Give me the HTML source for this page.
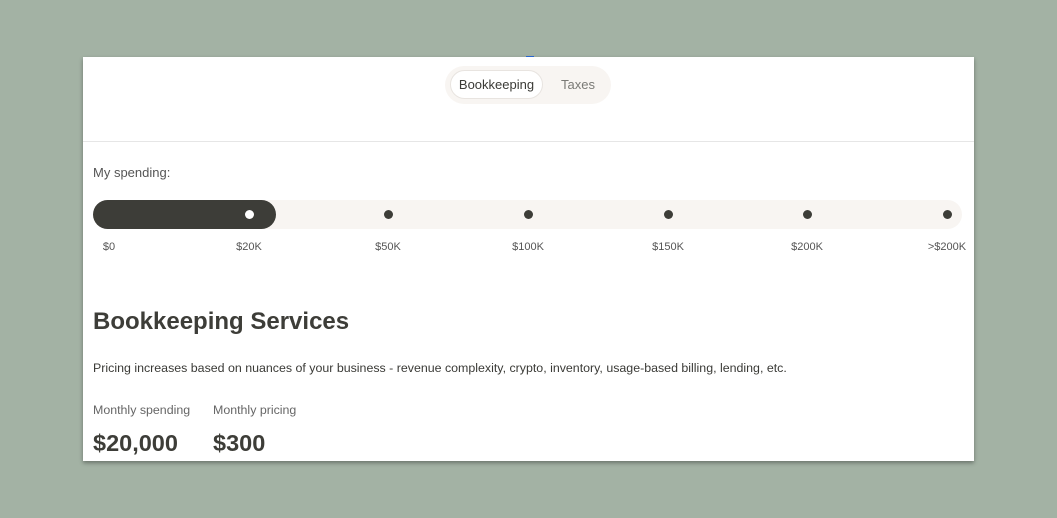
<!DOCTYPE html>
<html><head><style>
body{margin:0;width:1057px;height:518px;background:#a3b2a4;font-family:"Liberation Sans",sans-serif;position:relative;overflow:hidden}
.card{position:absolute;left:83px;top:57px;width:891px;height:404px;background:#fff;box-shadow:0 2px 4px rgba(0,0,0,.35)}
.a{position:absolute}
.tabs{left:362px;top:9px;width:166px;height:38px;border-radius:19px;background:#f8f5f2}
.act{left:5px;top:4px;width:93px;height:29px;border-radius:15px;background:#fff;border:1px solid #e8e4e0;box-sizing:border-box;font-size:13px;color:#3a3a36;text-align:center;line-height:27px}
.tx{left:116px;top:4px;font-size:13px;color:#7a7a76;line-height:29px}
.track{left:10px;top:143px;width:869px;height:29px;border-radius:15px;background:#f8f5f2}
.fill{left:10px;top:143px;width:183px;height:29px;border-radius:15px;background:#3d3d38}
.dot{width:9px;height:9px;border-radius:50%;background:#3d3d38;top:153px}
.lb{top:184px;font-size:11px;color:#555;transform:translateX(-50%)}
</style></head><body>
<div class="a" style="left:526px;top:56px;width:8px;height:4px;background:#2a6bd8"></div>
<div class="card">
<div class="a tabs"><div class="a act">Bookkeeping</div><div class="a tx">Taxes</div></div>
<div class="a" style="left:0;top:84px;width:891px;height:1px;background:#e6e6e6"></div>
<div class="a" style="left:10px;top:108px;font-size:13px;color:#555">My spending:</div>
<div class="a track"></div><div class="a fill"></div>
<div class="a dot" style="left:162px;background:#fff"></div>
<div class="a dot" style="left:301px"></div>
<div class="a dot" style="left:441px"></div>
<div class="a dot" style="left:581px"></div>
<div class="a dot" style="left:720px"></div>
<div class="a dot" style="left:860px"></div>
<div class="a lb" style="left:26px">$0</div>
<div class="a lb" style="left:166px">$20K</div>
<div class="a lb" style="left:305px">$50K</div>
<div class="a lb" style="left:445px">$100K</div>
<div class="a lb" style="left:585px">$150K</div>
<div class="a lb" style="left:724px">$200K</div>
<div class="a lb" style="left:864px">&gt;$200K</div>
<div class="a" style="left:10px;top:251px;font-size:24px;font-weight:bold;color:#3d3d38">Bookkeeping Services</div>
<div class="a" style="left:10px;top:304px;font-size:12.4px;color:#3a3a36">Pricing increases based on nuances of your business - revenue complexity, crypto, inventory, usage-based billing, lending, etc.</div>
<div class="a" style="left:10px;top:346px;font-size:12.4px;color:#666">Monthly spending</div>
<div class="a" style="left:130px;top:346px;font-size:12.4px;color:#666">Monthly pricing</div>
<div class="a" style="left:10px;top:373px;font-size:23.5px;font-weight:bold;color:#3d3d38">$20,000</div>
<div class="a" style="left:130px;top:373px;font-size:23.5px;font-weight:bold;color:#3d3d38">$300</div>
</div>
</body></html>
